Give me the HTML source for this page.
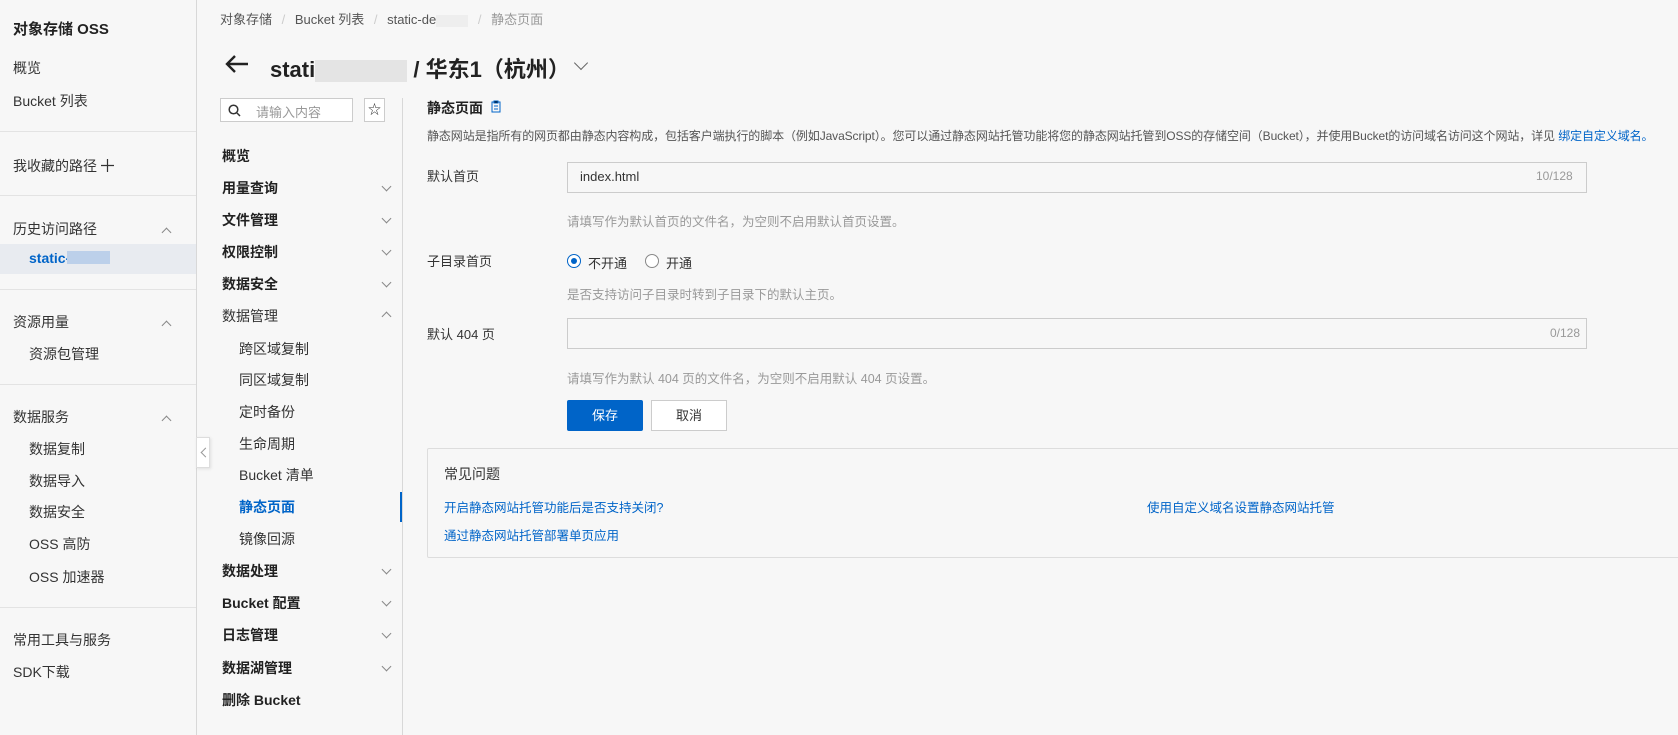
<!DOCTYPE html>
<html><head><meta charset="utf-8"><style>
*{box-sizing:border-box;margin:0;padding:0}
body{width:1678px;height:735px;overflow:hidden;background:#f7f7f7;font-family:"Liberation Sans","Noto Sans CJK SC",sans-serif;color:#333;font-size:14px;position:relative}
.a{position:absolute;white-space:nowrap}
.hr{position:absolute;left:0;width:196px;height:1px;background:#e3e3e3}
.chev{position:absolute;width:7px;height:7px;border-right:1.3px solid #888;border-bottom:1.3px solid #888;transform:rotate(45deg)}
.up{transform:rotate(-135deg)}
.b{font-weight:bold;color:#222}
.lk{color:#0064c8}
.gray{color:#999}
</style></head><body>
<div class="a" style="left:196px;top:0;width:1px;height:735px;background:#d8d8d8"></div>
<div class="a b" style="left:13px;top:18px;font-size:15px">对象存储 OSS</div>
<div class="a" style="left:13px;top:58px">概览</div>
<div class="a" style="left:13px;top:91px">Bucket 列表</div>
<div class="hr" style="top:131px"></div>
<div class="a" style="left:13px;top:156px">我收藏的路径</div>
<svg class="a" style="left:101px;top:159px" width="13" height="13"><path d="M6.5 0v13M0 6.5h13" stroke="#333" stroke-width="1.2"/></svg>
<div class="hr" style="top:195px"></div>
<div class="a" style="left:13px;top:219px">历史访问路径</div><div class="chev up" style="left:163px;top:229px"></div>
<div class="a" style="left:0;top:244px;width:196px;height:30px;background:#e8ebf0"></div>
<div class="a lk" style="left:29px;top:250px;font-weight:bold">static-</div>
<div class="a" style="left:67px;top:251px;width:43px;height:13px;background:#bcd0ea"></div>
<div class="hr" style="top:289px"></div>
<div class="a" style="left:13px;top:312px">资源用量</div><div class="chev up" style="left:163px;top:322px"></div>
<div class="a" style="left:29px;top:344px">资源包管理</div>
<div class="hr" style="top:384px"></div>
<div class="a" style="left:13px;top:407px">数据服务</div><div class="chev up" style="left:163px;top:417px"></div>
<div class="a" style="left:29px;top:439px">数据复制</div>
<div class="a" style="left:29px;top:471px">数据导入</div>
<div class="a" style="left:29px;top:502px">数据安全</div>
<div class="a" style="left:29px;top:534px">OSS 高防</div>
<div class="a" style="left:29px;top:567px">OSS 加速器</div>
<div class="hr" style="top:607px"></div>
<div class="a" style="left:13px;top:630px">常用工具与服务</div>
<div class="a" style="left:13px;top:662px">SDK下载</div>
<div class="a" style="left:196px;top:437px;width:14px;height:31px;background:#fff;border:1px solid #ddd;box-shadow:1px 1px 3px rgba(0,0,0,.1)"></div>
<div class="chev" style="left:202px;top:449px;transform:rotate(135deg);border-color:#999"></div>
<div class="a" style="left:220px;top:9px;font-size:13px;color:#555">对象存储 <span style="color:#ccc;margin:0 6px">/</span> Bucket 列表 <span style="color:#ccc;margin:0 6px">/</span> static-de<span style="display:inline-block;width:32px;height:12px;background:#eee;vertical-align:middle"></span> <span style="color:#ccc;margin:0 6px">/</span> <span class="gray">静态页面</span></div>
<svg class="a" style="left:224px;top:54px" width="26" height="20" viewBox="0 0 26 20"><path d="M24 10H3M11 2L3 10l8 8" stroke="#222" stroke-width="2.4" fill="none"/></svg>
<div class="a b" style="left:270px;top:52px;font-size:22px">stati<span style="display:inline-block;width:92px;height:22px;background:#e4e4e4;vertical-align:middle"></span> / 华东1（杭州）</div>
<div class="chev" style="left:576px;top:58px;width:10px;height:10px;border-color:#666"></div>
<div class="a" style="left:402px;top:98px;width:1px;height:637px;background:#d8d8d8"></div>
<div class="a" style="left:220px;top:98px;width:133px;height:24px;border:1px solid #ccc;background:#fff"></div>
<svg class="a" style="left:228px;top:104px" width="13" height="13"><circle cx="5.5" cy="5.5" r="4.3" stroke="#333" stroke-width="1.5" fill="none"/><path d="M9 9l3 3" stroke="#333" stroke-width="1.5"/></svg>
<div class="a gray" style="left:256px;top:102px;font-size:13px">请输入内容</div>
<div class="a" style="left:364px;top:98px;width:21px;height:24px;border:1px solid #ccc;background:#fff;text-align:center;font-size:13px;line-height:21px">☆</div>
<div class="a b" style="left:222px;top:146px">概览</div>
<div class="a b" style="left:222px;top:178px">用量查询</div><div class="chev" style="left:383px;top:183px"></div>
<div class="a b" style="left:222px;top:210px">文件管理</div><div class="chev" style="left:383px;top:215px"></div>
<div class="a b" style="left:222px;top:242px">权限控制</div><div class="chev" style="left:383px;top:247px"></div>
<div class="a b" style="left:222px;top:274px">数据安全</div><div class="chev" style="left:383px;top:279px"></div>
<div class="a" style="left:222px;top:306px">数据管理</div><div class="chev up" style="left:383px;top:313px"></div>
<div class="a" style="left:239px;top:339px">跨区域复制</div>
<div class="a" style="left:239px;top:370px">同区域复制</div>
<div class="a" style="left:239px;top:402px">定时备份</div>
<div class="a" style="left:239px;top:434px">生命周期</div>
<div class="a" style="left:239px;top:465px">Bucket 清单</div>
<div class="a lk" style="left:239px;top:497px;font-weight:bold">静态页面</div>
<div class="a" style="left:400px;top:492px;width:2px;height:30px;background:#0064c8"></div>
<div class="a" style="left:239px;top:529px">镜像回源</div>
<div class="a b" style="left:222px;top:561px">数据处理</div><div class="chev" style="left:383px;top:566px"></div>
<div class="a b" style="left:222px;top:593px">Bucket 配置</div><div class="chev" style="left:383px;top:598px"></div>
<div class="a b" style="left:222px;top:625px">日志管理</div><div class="chev" style="left:383px;top:630px"></div>
<div class="a b" style="left:222px;top:658px">数据湖管理</div><div class="chev" style="left:383px;top:663px"></div>
<div class="a b" style="left:222px;top:690px">删除 Bucket</div>
<div class="a b" style="left:427px;top:98px;font-size:14px">静态页面</div>
<svg class="a" style="left:491px;top:100px" width="10" height="13"><rect x="1" y="2" width="8" height="10" stroke="#0064c8" fill="none"/><path d="M3 1h4v2H3zM3 6h4M3 9h4" stroke="#0064c8"/></svg>
<div class="a" style="left:427px;top:127px;font-size:12px;color:#555;letter-spacing:-0.1px">静态网站是指所有的网页都由静态内容构成，包括客户端执行的脚本（例如JavaScript）。您可以通过静态网站托管功能将您的静态网站托管到OSS的存储空间（Bucket），并使用Bucket的访问域名访问这个网站，详见 <span class="lk">绑定自定义域名。</span></div>
<div class="a" style="left:427px;top:166px;font-size:13px">默认首页</div>
<div class="a" style="left:567px;top:162px;width:1020px;height:31px;border:1px solid #ccc;background:#f7f7f7"></div>
<div class="a" style="left:580px;top:169px;font-size:13px">index.html</div>
<div class="a gray" style="left:1536px;top:169px;font-size:12px">10/128</div>
<div class="a gray" style="left:567px;top:211px;font-size:12.5px">请填写作为默认首页的文件名，为空则不启用默认首页设置。</div>
<div class="a" style="left:427px;top:251px;font-size:13px">子目录首页</div>
<div class="a" style="left:567px;top:254px;width:14px;height:14px;border-radius:50%;border:1px solid #0064c8;background:#fff"></div>
<div class="a" style="left:571px;top:258px;width:6px;height:6px;border-radius:50%;background:#0064c8"></div>
<div class="a" style="left:588px;top:253px;font-size:13px">不开通</div>
<div class="a" style="left:645px;top:254px;width:14px;height:14px;border-radius:50%;border:1px solid #888;background:#fff"></div>
<div class="a" style="left:666px;top:253px;font-size:13px">开通</div>
<div class="a gray" style="left:567px;top:284px;font-size:12.5px">是否支持访问子目录时转到子目录下的默认主页。</div>
<div class="a" style="left:427px;top:324px;font-size:13px">默认 404 页</div>
<div class="a" style="left:567px;top:318px;width:1020px;height:31px;border:1px solid #ccc;background:#f7f7f7"></div>
<div class="a gray" style="left:1550px;top:326px;font-size:12px">0/128</div>
<div class="a gray" style="left:567px;top:368px;font-size:12.5px">请填写作为默认 404 页的文件名，为空则不启用默认 404 页设置。</div>
<div class="a" style="left:567px;top:400px;width:76px;height:31px;background:#0064c8;border-radius:2px;color:#fff;font-size:13px;text-align:center;line-height:31px">保存</div>
<div class="a" style="left:651px;top:400px;width:76px;height:31px;border:1px solid #ccc;background:#fff;font-size:13px;text-align:center;line-height:29px">取消</div>
<div class="a" style="left:427px;top:448px;width:1260px;height:110px;border:1px solid #ddd;background:#f7f7f7;border-radius:2px"></div>
<div class="a" style="left:444px;top:464px;font-size:14px">常见问题</div>
<div class="a lk" style="left:444px;top:497px;font-size:12.5px">开启静态网站托管功能后是否支持关闭?</div>
<div class="a lk" style="left:1147px;top:497px;font-size:12.5px">使用自定义域名设置静态网站托管</div>
<div class="a lk" style="left:444px;top:525px;font-size:12.5px">通过静态网站托管部署单页应用</div>
</body></html>
